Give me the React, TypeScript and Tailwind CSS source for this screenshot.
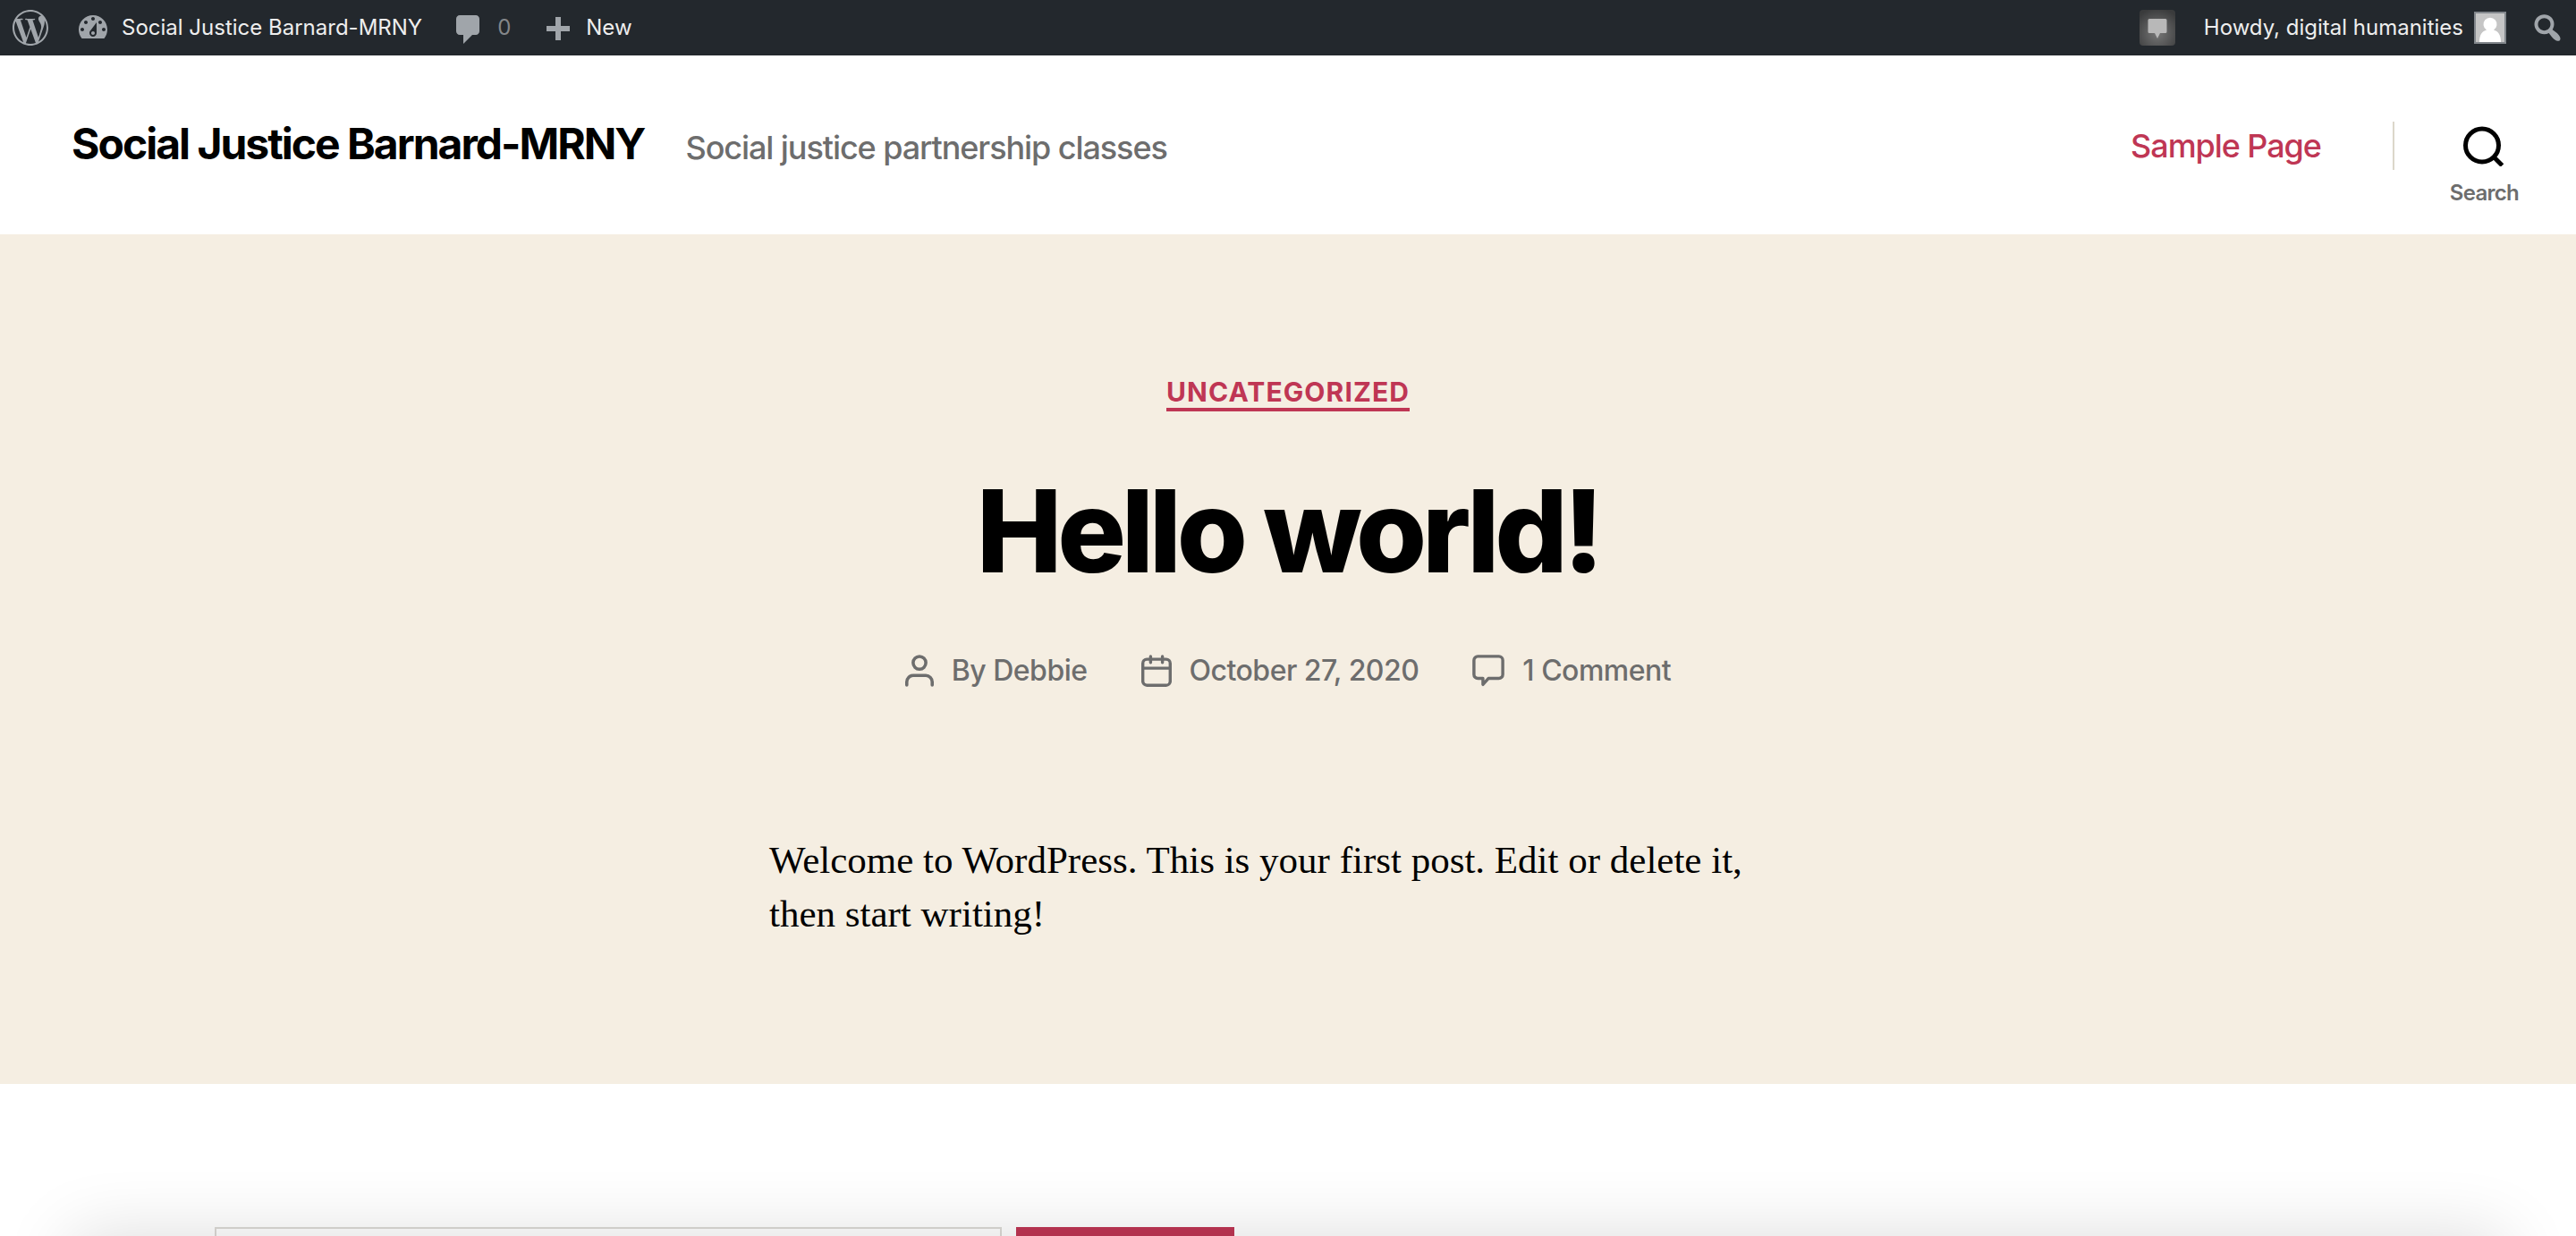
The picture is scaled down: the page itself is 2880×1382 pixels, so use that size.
import type { ReactNode } from "react";
import { SiWordpress } from "react-icons/si";

type IconProps = { box: string; d: string; className: string };

function Icon({ box, d, className }: IconProps) {
  return (
    <svg viewBox={box} fill="currentColor" fillRule="evenodd" aria-hidden="true" className={className}>
      <path d={d} />
    </svg>
  );
}

const paths = {
  dashboard:
    "M3.76 16h12.48c1.1-1.37 1.76-3.11 1.76-5 0-4.42-3.58-8-8-8s-8 3.58-8 8c0 1.89.66 3.63 1.76 5zM10 4c.55 0 1 .45 1 1s-.45 1-1 1-1-.45-1-1 .45-1 1-1zM6 6c.55 0 1 .45 1 1s-.45 1-1 1-1-.45-1-1 .45-1 1-1zm8 0c.55 0 1 .45 1 1s-.45 1-1 1-1-.45-1-1 .45-1 1-1zm-5.37 5.55L12 7v6c0 1.1-.9 2-2 2s-2-.9-2-2c0-.57.24-1.08.63-1.45zM4 10c.55 0 1 .45 1 1s-.45 1-1 1-1-.45-1-1 .45-1 1-1zm12 0c.55 0 1 .45 1 1s-.45 1-1 1-1-.45-1-1 .45-1 1-1zm-5 3c0-.55-.45-1-1-1s-1 .45-1 1 .45 1 1 1 1-.45 1-1z",
  bubble: "M5 2h9c1.1 0 2 .9 2 2v7c0 1.1-.9 2-2 2h-2l-5 5v-5H5c-1.1 0-2-.9-2-2V4c0-1.1.9-2 2-2z",
  plus: "M17 7v3h-5v5H9v-5H4V7h5V2h3v5h5z",
  barSearch:
    "M12.14 4.18c1.87 1.87 2.11 4.75.72 6.89.12.1.22.21.36.31.2.16.47.36.81.59.34.24.56.39.66.47.42.31.73.57.94.78.32.32.6.65.84 1 .25.35.44.69.59 1.04.14.35.21.68.18 1-.02.32-.14.59-.36.81s-.49.34-.81.36c-.31.02-.65-.04-.99-.19-.35-.14-.7-.34-1.04-.59-.35-.24-.68-.52-1-.84-.21-.21-.47-.52-.77-.93-.1-.13-.25-.35-.47-.66-.22-.32-.4-.57-.56-.78-.16-.2-.29-.35-.44-.5-2.07 1.09-4.69.76-6.44-.98-2.14-2.15-2.14-5.64 0-7.78 2.15-2.15 5.63-2.15 7.78 0zm-1.41 6.36c1.36-1.37 1.36-3.58 0-4.95-1.37-1.37-3.59-1.37-4.95 0-1.37 1.37-1.37 3.58 0 4.95 1.36 1.37 3.58 1.37 4.95 0z",
  user: "M18 19a1 1 0 0 1-2 0v-2a3 3 0 0 0-3-3H5a3 3 0 0 0-3 3v2a1 1 0 0 1-2 0v-2a5 5 0 0 1 5-5h8a5 5 0 0 1 5 5v2zM9 10A5 5 0 1 1 9 0a5 5 0 0 1 0 10zm0-2a3 3 0 1 0 0-6 3 3 0 0 0 0 6z",
};

function CalendarIcon() {
  return (
    <svg viewBox="0 0 18 19" fill="none" stroke="currentColor" strokeWidth="1.8" strokeLinecap="round" aria-hidden="true" className="h-9 w-[34px]">
      <rect x="0.9" y="2.7" width="16.2" height="15.4" rx="2.4" />
      <path d="M1 8h16M5.5 1v3.6M12.5 1v3.6" />
    </svg>
  );
}

function CommentIcon() {
  return (
    <svg viewBox="0 0 19 19" fill="none" stroke="currentColor" strokeWidth="1.8" strokeLinejoin="round" aria-hidden="true" className="size-9">
      <path d="M3.3 1h12.4A2.3 2.3 0 0 1 18 3.3v8.4a2.3 2.3 0 0 1-2.3 2.3H9.5L6.3 17.6V14H3.3A2.3 2.3 0 0 1 1 11.7V3.3A2.3 2.3 0 0 1 3.3 1z" />
    </svg>
  );
}

function BarLink({ children, className }: { children: ReactNode; className: string }) {
  return (
    <a href="#" className={`flex items-center ${className}`}>
      {children}
    </a>
  );
}

function AdminBar() {
  return (
    <nav aria-label="Toolbar" className="flex h-[62px] items-center justify-between bg-[#23282d] pr-3 pl-[14px] text-[24px] leading-8 text-[#eee]">
      <div className="flex items-center">
        <a href="#" aria-label="About WordPress" className="mr-[30px] text-[#a0a5aa]">
          <SiWordpress className="size-10" />
        </a>
        <BarLink className="mr-8 gap-3">
          <Icon box="0 0 20 20" d={paths.dashboard} className="size-10 text-[#a0a5aa]" />
          Social Justice Barnard-MRNY
        </BarLink>
        <BarLink className="mr-8 gap-3 text-[#84878a]">
          <Icon box="0 0 20 20" d={paths.bubble} className="mt-1 size-10 text-[#a0a5aa]" />0
        </BarLink>
        <BarLink className="gap-3">
          <Icon box="0 0 20 20" d={paths.plus} className="mt-2 size-10 text-[#a0a5aa]" />
          New
        </BarLink>
      </div>
      <div className="flex items-center">
        <a href="#" aria-label="Notifications" className="mr-8">
          <svg viewBox="0 0 40 40" className="size-10" aria-hidden="true">
            <defs>
              <radialGradient id="badge" cx="50%" cy="65%" r="70%">
                <stop offset="0" stopColor="#777" />
                <stop offset="1" stopColor="#3a3b3c" />
              </radialGradient>
            </defs>
            <rect width="40" height="40" rx="4" fill="url(#badge)" />
            <path d="M11 10h18a1.5 1.5 0 0 1 1.5 1.5v13a1.5 1.5 0 0 1-1.5 1.5h-6l-3 6-3-6h-6a1.5 1.5 0 0 1-1.5-1.5v-13A1.5 1.5 0 0 1 11 10z" fill="#b8b8b8" />
          </svg>
        </a>
        <BarLink className="mr-[26px] gap-3">
          Howdy, digital humanities
          <svg viewBox="0 0 36 36" className="size-9" aria-hidden="true">
            <rect width="36" height="36" fill="#82878c" />
            <rect x="2" y="2" width="32" height="32" fill="#c5c5c5" />
            <path d="M6 34c0-8 3-12 8-13.5a7.5 7.5 0 1 1 8 0c5 1.5 8 5.5 8 13.5z" fill="#fff" />
          </svg>
        </BarLink>
        <button type="button" aria-label="Search toolbar" className="text-[#a0a5aa]">
          <Icon box="0 0 20 20" d={paths.barSearch} className="size-10" />
        </button>
      </div>
    </nav>
  );
}

function SiteHeader() {
  return (
    <header className="flex h-[200px] items-start justify-between bg-white pr-[64px] pl-20">
      <div className="flex items-baseline gap-[46px] pt-[69px]">
        <a href="#" className="text-[48px] leading-[60px] font-bold tracking-[-0.0415em] text-black">
          Social Justice Barnard-MRNY
        </a>
        <p className="text-[36px] leading-[48px] font-medium tracking-[-0.03em] text-[#6d6d6d]">Social justice partnership classes</p>
      </div>
      <div className="flex items-start pt-[74px]">
        <a href="#" className="mr-20 text-[36px] leading-[54px] font-medium tracking-[-0.03em] text-[#bf3654]">
          Sample Page
        </a>
        <span className="mr-[62px] h-[54px] w-0.5 bg-[#dcd7ca]" />
        <button type="button" className="flex flex-col items-center gap-3 pt-1 text-[24px] leading-9 font-semibold tracking-[-0.03em] text-[#6d6d6d]">
          <svg viewBox="0 0 46 46" fill="none" stroke="#000" strokeWidth="5" aria-hidden="true" className="size-[46px]">
            <circle cx="21" cy="22.5" r="18.5" />
            <path d="M34 35.5l9.5 9.5" />
          </svg>
          Search
        </button>
      </div>
    </header>
  );
}

function PostHeader() {
  return (
    <div className="flex flex-col items-center pt-[158px]">
      <a href="#" className="border-b-4 border-[#bf3654] text-[30px] leading-9 font-bold tracking-[0.0367em] text-[#bf3654] uppercase">
        Uncategorized
      </a>
      <h1 className="mt-[66px] text-[128px] leading-[136px] font-extrabold tracking-[-0.0415em] text-black">Hello world!</h1>
      <ul className="mt-[66px] flex items-center gap-[60px] text-[32px] leading-[44px] font-medium tracking-[-0.016em] text-[#6d6d6d]">
        <li className="flex items-center gap-5">
          <Icon box="0 0 18 20" d={paths.user} className="h-9 w-8" />
          <span>
            By <a href="#">Debbie</a>
          </span>
        </li>
        <li className="flex items-center gap-5">
          <CalendarIcon />
          <a href="#">October 27, 2020</a>
        </li>
        <li className="flex items-center gap-5">
          <CommentIcon />
          <a href="#">1 Comment</a>
        </li>
      </ul>
    </div>
  );
}

export default function App() {
  return (
    <div className="relative h-screen overflow-hidden bg-white font-['Inter',sans-serif]">
      <AdminBar />
      <SiteHeader />
      <main className="bg-[#f5eee2] pb-[160px]">
        <PostHeader />
        <p className="mx-auto mt-[160px] max-w-[1160px] font-['Liberation_Serif',serif] text-[43px] leading-[60px] text-black">
          Welcome to WordPress. This is your first post. Edit or delete it, then start writing!
        </p>
      </main>
      <form role="search" className="flex gap-4 px-60 pt-[160px]">
        <input type="search" aria-label="Search for" className="h-24 w-[880px] border-2 border-[#dcdad6] bg-transparent px-6 text-[36px]" />
        <button type="submit" aria-label="Search" className="h-24 w-[244px] bg-[#bf3654]" />
      </form>
      <div className="pointer-events-none absolute inset-x-[80px] top-full h-40 shadow-[0_0_80px_rgba(0,0,0,0.14)]" />
    </div>
  );
}
